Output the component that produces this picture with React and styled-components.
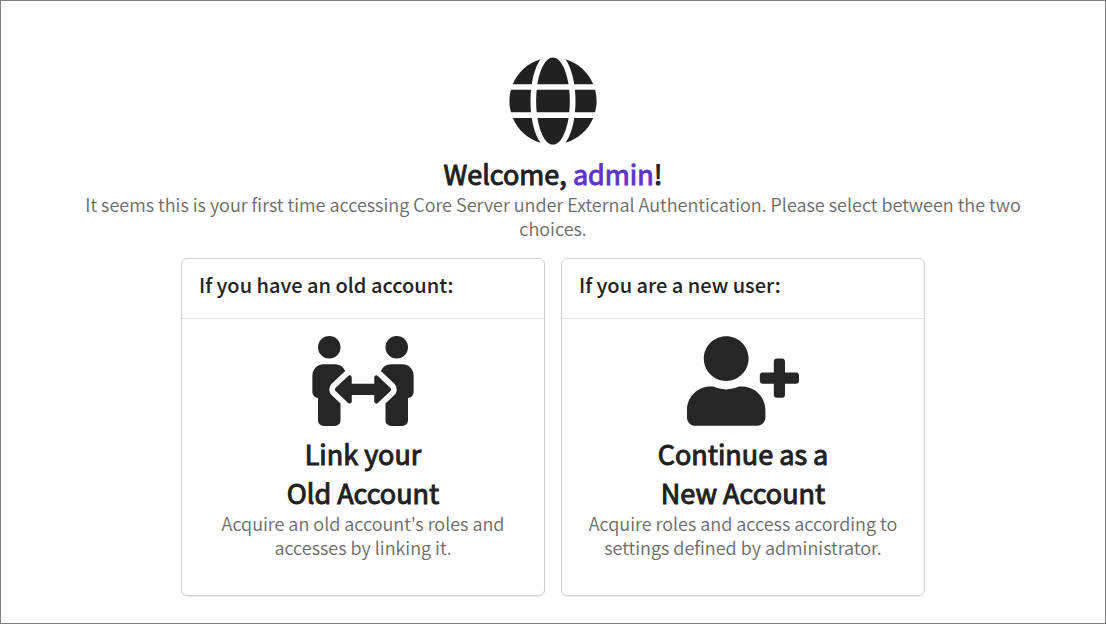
import React from "react";
import styled, { createGlobalStyle } from "styled-components";
import { FaGlobe, FaPeopleArrows, FaUserPlus } from "react-icons/fa";

const GlobalStyle = createGlobalStyle`
  * {
    box-sizing: border-box;
  }
  body {
    margin: 0;
    background: #fff;
    color: #212121;
    font-family: "Noto Sans CJK SC", "Noto Sans CJK JP", sans-serif;
  }
`;

const Page = styled.main`
  min-height: 100vh;
  padding: 55px 72px 27px;
  border: 1px solid #7f7f7f;
  text-align: center;
`;

const Icon = styled.div`
  svg {
    display: block;
    height: 90px;
    width: ${(props) => props.$width}px;
    margin: 0 auto;
    color: ${(props) => props.$color || "#262626"};
  }
`;

const Title = styled.h1`
  margin: 8px 0 -1px;
  font-size: 27px;
  line-height: 39px;
  font-weight: 400;
  -webkit-text-stroke: 1px currentColor;
`;

const UserName = styled.span`
  color: #5e35c8;
`;

const Text = styled.p`
  margin: 0;
  font-size: 18px;
  line-height: 24px;
  font-weight: 350;
  color: #6a6a6a;
`;

const Choices = styled.div`
  display: grid;
  grid-template-columns: 1fr 1fr;
  gap: 16px;
  max-width: 744px;
  margin: 18px auto 0;
`;

const Card = styled.section`
  border: 1px solid #d2d2d2;
  border-radius: 6px;
  box-shadow: 0 1px 1px rgba(0, 0, 0, 0.08);
`;

const CardHeader = styled.h2`
  margin: 0;
  padding: 11px 17px 18px;
  border-bottom: 1px solid #e4e4e4;
  font-size: 20px;
  line-height: 30px;
  font-weight: 500;
  text-align: left;
`;

const CardBody = styled.div`
  padding: 17px 24px 36px;
`;

export default function App() {
  return (
    <>
      <GlobalStyle />
      <Page>
        <Icon $width={88} $color="#212121">
          <FaGlobe />
        </Icon>
        <Title>
          Welcome, <UserName>admin</UserName>!
        </Title>
        <Text>
          It seems this is your first time accessing Core Server under External
          Authentication. Please select between the two choices.
        </Text>
        <Choices>
          <Card>
            <CardHeader>If you have an old account:</CardHeader>
            <CardBody>
              <Icon $width={102}>
                <FaPeopleArrows />
              </Icon>
              <Title as="h3">
                Link your
                <br />
                Old Account
              </Title>
              <Text>Acquire an old account's roles and accesses by linking it.</Text>
            </CardBody>
          </Card>
          <Card>
            <CardHeader>If you are a new user:</CardHeader>
            <CardBody>
              <Icon $width={112}>
                <FaUserPlus />
              </Icon>
              <Title as="h3">
                Continue as a
                <br />
                New Account
              </Title>
              <Text>
                Acquire roles and access according to settings defined by
                administrator.
              </Text>
            </CardBody>
          </Card>
        </Choices>
      </Page>
    </>
  );
}
